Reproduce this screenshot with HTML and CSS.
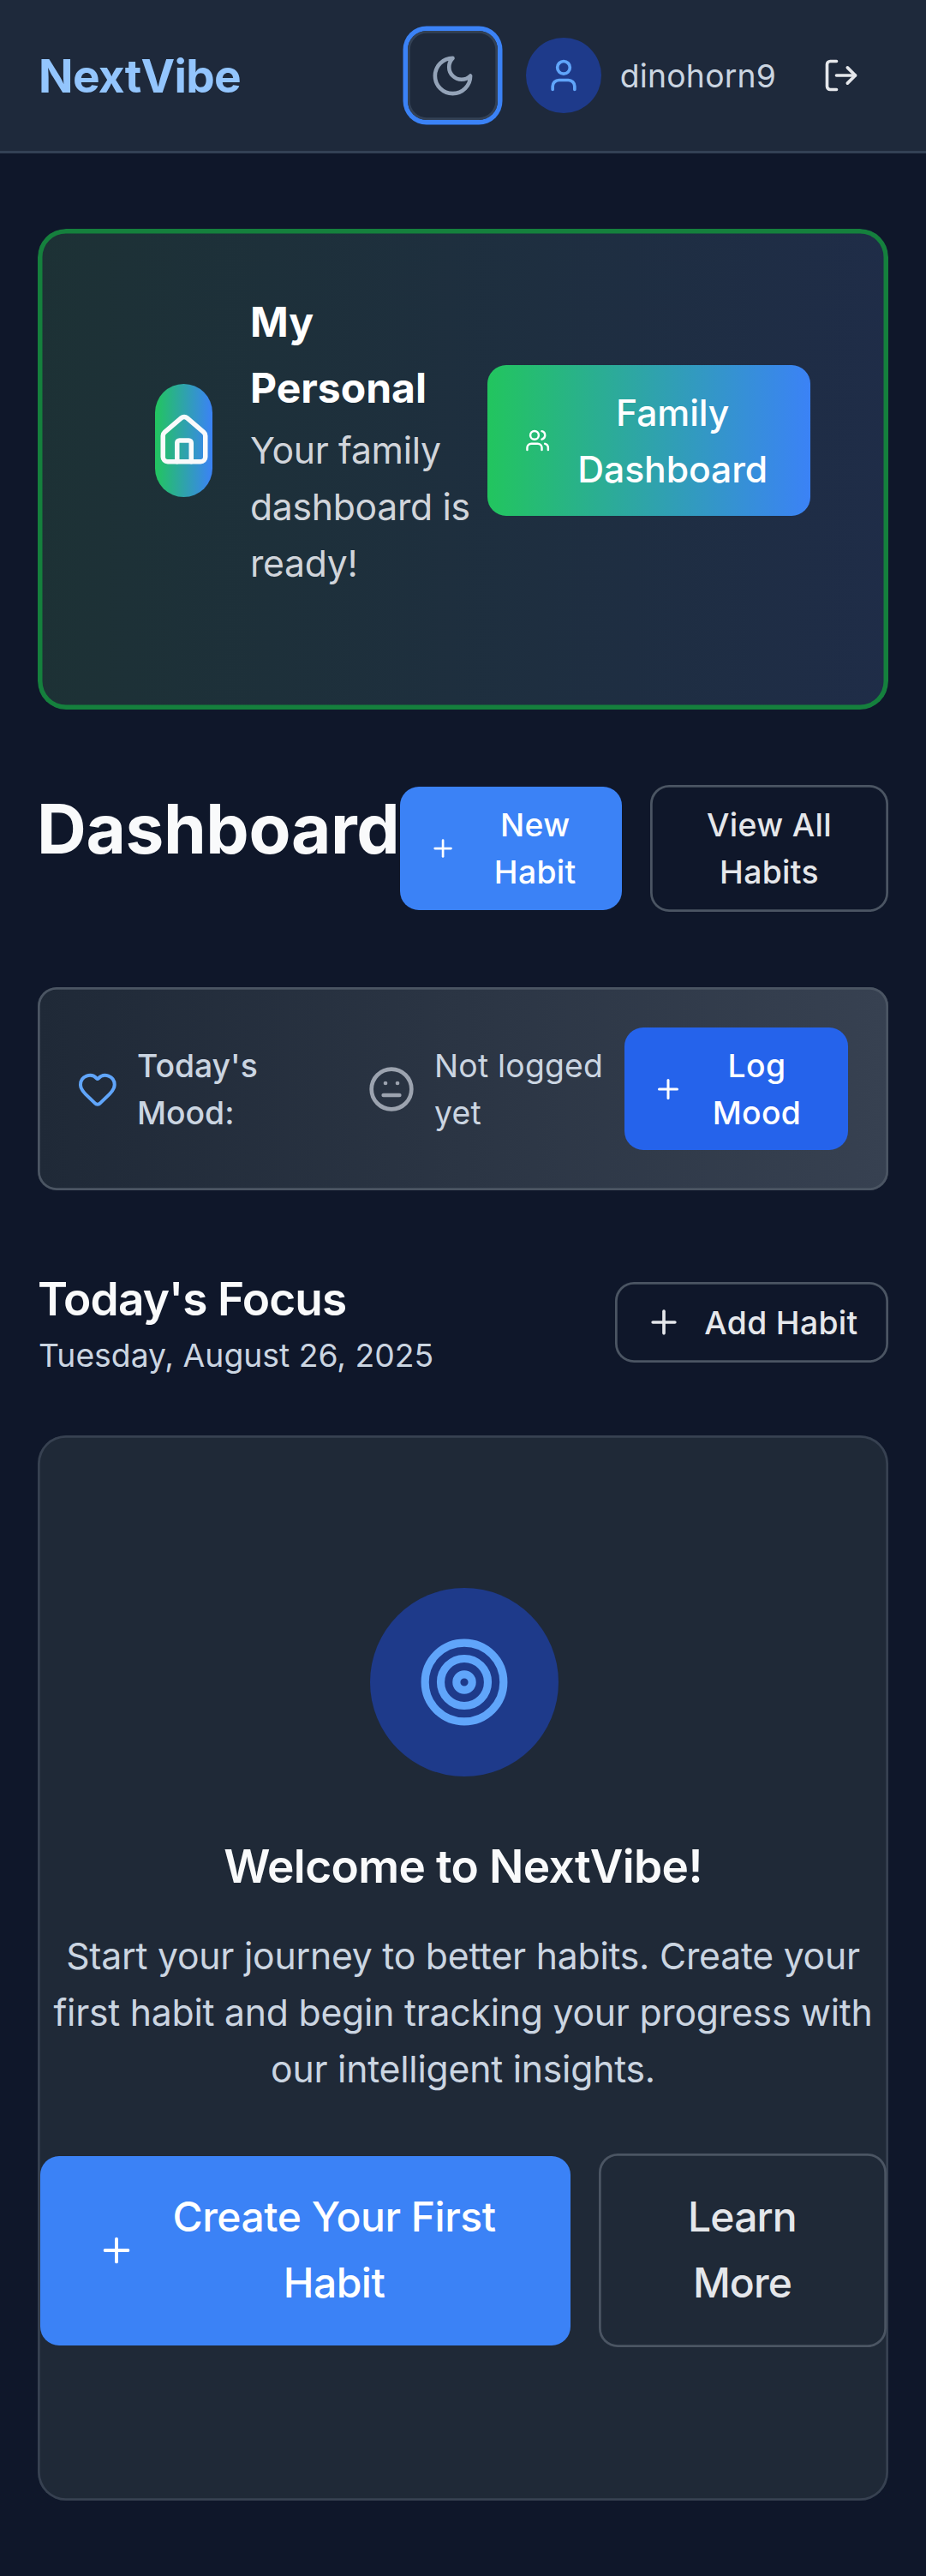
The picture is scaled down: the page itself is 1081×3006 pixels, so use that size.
FILE: index.html
```html
<!DOCTYPE html>
<html lang="en">
<head>
<meta charset="utf-8">
<title>NextVibe</title>
<link rel="stylesheet" href="styles.css">
</head>
<body>
<header class="topbar">
  <div class="logo">NextVibe</div>
  <button class="theme-toggle" aria-label="Toggle theme">
    <svg class="icon icon-55" viewBox="0 0 24 24"><path d="M12 3a6 6 0 0 0 9 9 9 9 0 1 1-9-9Z"/></svg>
  </button>
  <div class="avatar">
    <svg class="icon icon-44" viewBox="0 0 24 24"><path d="M19 21v-2a4 4 0 0 0-4-4H9a4 4 0 0 0-4 4v2"/><circle cx="12" cy="7" r="4"/></svg>
  </div>
  <span class="username">dinohorn9</span>
  <button class="logout" aria-label="Log out">
    <svg class="icon icon-44" viewBox="0 0 24 24"><path d="M9 21H5a2 2 0 0 1-2-2V5a2 2 0 0 1 2-2h4"/><path d="m16 17 5-5-5-5"/><path d="M21 12H9"/></svg>
  </button>
</header>

<main class="content">
  <section class="banner">
    <div class="banner-badge">
      <svg class="icon icon-66" viewBox="0 0 24 24"><path d="M15 21v-8a1 1 0 0 0-1-1h-4a1 1 0 0 0-1 1v8"/><path d="M3 10a2 2 0 0 1 .709-1.528l7-5.999a2 2 0 0 1 2.582 0l7 5.999A2 2 0 0 1 21 10v9a2 2 0 0 1-2 2H5a2 2 0 0 1-2-2z"/></svg>
    </div>
    <div class="banner-text">
      <h3>My<br>Personal</h3>
      <p>Your family<br>dashboard is<br>ready!</p>
    </div>
    <button class="btn btn-family">
      <svg class="icon icon-users" viewBox="0 0 24 24"><path d="M16 21v-2a4 4 0 0 0-4-4H6a4 4 0 0 0-4 4v2"/><circle cx="9" cy="7" r="4"/><path d="M22 21v-2a4 4 0 0 0-3-3.87"/><path d="M16 3.13a4 4 0 0 1 0 7.75"/></svg>
      <span>Family<br>Dashboard</span>
    </button>
  </section>

  <div class="page-head">
    <h1>Dashboard</h1>
    <button class="btn btn-new">
      <svg class="icon icon-32" viewBox="0 0 24 24"><path d="M5 12h14"/><path d="M12 5v14"/></svg>
      <span>New<br>Habit</span>
    </button>
    <button class="btn btn-outline btn-view"><span>View All<br>Habits</span></button>
  </div>

  <section class="mood">
    <div class="mood-label">
      <svg class="icon icon-heart" viewBox="0 0 24 24"><path d="M2 9.5a5.5 5.5 0 0 1 9.591-3.676.56.56 0 0 0 .818 0A5.49 5.49 0 0 1 22 9.5c0 2.29-1.5 4-3 5.5l-5.492 5.313a2 2 0 0 1-3 .019L5 15c-1.5-1.5-3-3.2-3-5.5"/></svg>
      <span>Today's<br>Mood:</span>
    </div>
    <div class="mood-status">
      <svg class="icon icon-face" viewBox="0 0 24 24"><circle cx="12" cy="12" r="10"/><path d="M8 15h8"/><path d="M9 9h.01"/><path d="M15 9h.01"/></svg>
      <span>Not logged<br>yet</span>
    </div>
    <button class="btn btn-mood">
      <svg class="icon icon-36" viewBox="0 0 24 24"><path d="M5 12h14"/><path d="M12 5v14"/></svg>
      <span>Log<br>Mood</span>
    </button>
  </section>

  <div class="focus-head">
    <div>
      <h2>Today's Focus</h2>
      <p>Tuesday, August 26, 2025</p>
    </div>
    <button class="btn btn-outline btn-add">
      <svg class="icon icon-44" viewBox="0 0 24 24"><path d="M5 12h14"/><path d="M12 5v14"/></svg>
      <span>Add Habit</span>
    </button>
  </div>

  <section class="welcome">
    <div class="target">
      <svg class="icon icon-110" viewBox="0 0 24 24"><circle cx="12" cy="12" r="10"/><circle cx="12" cy="12" r="6"/><circle cx="12" cy="12" r="2"/></svg>
    </div>
    <h3>Welcome to NextVibe!</h3>
    <p>Start your journey to better habits. Create your<br>first habit and begin tracking your progress with<br>our intelligent insights.</p>
    <div class="welcome-actions">
      <button class="btn btn-create">
        <svg class="icon icon-46" viewBox="0 0 24 24"><path d="M5 12h14"/><path d="M12 5v14"/></svg>
        <span>Create Your First<br>Habit</span>
      </button>
      <button class="btn btn-outline btn-learn"><span>Learn<br>More</span></button>
    </div>
  </section>
</main>
</body>
</html>
```
FILE: styles.css
```css
* {
  box-sizing: border-box;
  margin: 0;
}

body {
  min-height: 3006px;
  background: #0f172a;
  color: #f9fafb;
  font-family: Inter, "Liberation Sans", sans-serif;
  font-size: 37.3px;
  line-height: 55px;
}

button {
  padding: 0;
  border: 0;
  background: none;
  color: inherit;
  font: inherit;
}

/* Icons */
.icon {
  display: block;
  flex: none;
  fill: none;
  stroke: currentColor;
  stroke-width: 2;
  stroke-linecap: round;
  stroke-linejoin: round;
}
.icon-32 { width: 32.2px; height: 32.2px; }
.icon-36 { width: 36px; height: 36px; }
.icon-44 { width: 44px; height: 44px; }
.icon-46 { width: 46px; height: 46px; }
.icon-55 { width: 55px; height: 55px; }
.icon-66 { width: 66px; height: 66px; }
.icon-110 { width: 110px; height: 110px; }
.icon-users { width: 29.3px; height: 44px; }
.icon-heart { width: 47.7px; height: 47.7px; color: #60a5fa; }
.icon-face { width: 56px; height: 56px; color: #9ca3af; }

/* Header */
.topbar {
  display: flex;
  align-items: center;
  height: 179px;
  padding: 0 44.3px 0 45px;
  background: #1e293b;
  border-bottom: 3px solid #334155;
}
.logo {
  margin-right: auto;
  color: #93c5fd;
  font-size: 53.2px;
  font-weight: 700;
  line-height: 77px;
  letter-spacing: -0.0122em;
}
.theme-toggle {
  display: flex;
  align-items: center;
  justify-content: center;
  width: 104.5px;
  height: 104.5px;
  margin-right: 33px;
  border-radius: 22px;
  box-shadow: 0 0 0 5.5px #3b82f6, inset 0 0 0 2.75px #334155;
  color: #94a3b8;
}
.avatar {
  display: flex;
  align-items: center;
  justify-content: center;
  width: 88px;
  height: 88px;
  margin-right: 22px;
  border-radius: 50%;
  background: #1e3a8a;
  color: #60a5fa;
}
.username {
  width: 203px;
  color: #cbd5e1;
  letter-spacing: 0.0059em;
}
.logout {
  display: flex;
  align-items: center;
  justify-content: center;
  width: 110px;
  height: 99px;
  color: #e5e7eb;
}

.content {
  padding: 88px 44px;
}

/* Buttons */
.btn {
  display: flex;
  flex: none;
  align-items: center;
  border-radius: 22px;
  color: #fff;
  font-weight: 500;
  text-align: center;
  letter-spacing: 0.009em;
  white-space: nowrap;
}
.btn span {
  flex: 1;
}
.btn-outline {
  box-shadow: inset 0 0 0 2.75px #4b5563;
  color: #e5e7eb;
}

/* Family banner */
.banner {
  display: flex;
  align-items: flex-start;
  height: 561px;
  padding: 71.3px 91px 0 137px;
  border-radius: 33px;
  background: linear-gradient(to right, rgba(20, 83, 45, 0.2), rgba(30, 58, 138, 0.2)), #1f2937;
  box-shadow: inset 0 0 0 5.5px #15803d;
}
.banner-badge {
  display: flex;
  align-items: center;
  justify-content: center;
  flex: none;
  width: 67px;
  height: 132px;
  margin: 110px 44px 0 0;
  border-radius: 33.5px;
  background: linear-gradient(to right, #22c55e, #3b82f6);
}
.banner-text {
  flex: none;
  width: 277.3px;
}
.banner-text h3 {
  margin-top: -1px;
  color: #fff;
  font-size: 48px;
  font-weight: 700;
  line-height: 77px;
}
.banner-text p {
  margin-top: 2px;
  color: #d1d5db;
  font-size: 42.7px;
  line-height: 66px;
  letter-spacing: -0.007em;
}
.btn-family {
  gap: 25.7px;
  width: 376.8px;
  height: 176px;
  margin-top: 88px;
  padding: 0 44px;
  background: linear-gradient(to right, #22c55e, #3b82f6);
  font-size: 42.7px;
  line-height: 66px;
  letter-spacing: -0.002em;
}
.btn-family span {
  padding-top: 2px;
}

/* Page heading */
.page-head {
  display: flex;
  align-items: center;
  height: 148px;
  margin-top: 88px;
}
h1 {
  align-self: flex-start;
  width: 423px;
  padding-top: 1px;
  font-size: 80px;
  font-weight: 700;
  line-height: 99px;
  letter-spacing: -0.0046em;
  text-indent: -1px;
  white-space: nowrap;
}
.btn-new {
  gap: 24px;
  width: 258.7px;
  height: 143.5px;
  margin-right: 33.3px;
  padding: 0 33px 0 33.5px;
  background: #3b82f6;
}
.btn-view {
  width: 278px;
  height: 148px;
}

/* Mood */
.mood {
  display: flex;
  align-items: center;
  height: 237px;
  margin-top: 88px;
  padding: 0 47px 0 46.3px;
  border-radius: 22px;
  background: linear-gradient(to right, #1f2937, #374151);
  box-shadow: inset 0 0 0 2.75px #4b5563;
  color: #cbd5e1;
}
.mood-label,
.mood-status {
  display: flex;
  flex: none;
  align-items: center;
  gap: 22px;
}
.mood-label {
  width: 338.7px;
  font-weight: 500;
}
.mood-status {
  width: 300px;
  letter-spacing: 0.006em;
}
.btn-mood {
  gap: 12px;
  width: 261px;
  height: 143px;
  padding: 0 33px;
  background: #2563eb;
}

/* Today's focus */
.focus-head {
  display: flex;
  align-items: center;
  justify-content: space-between;
  margin-top: 88px;
}
h2 {
  font-size: 53.2px;
  font-weight: 600;
  line-height: 77px;
  letter-spacing: -0.0166em;
}
.focus-head p {
  color: #cbd5e1;
  text-indent: 1px;
}
.btn-add {
  gap: 25px;
  width: 319.4px;
  height: 93.5px;
  padding-left: 35.7px;
  text-align: left;
}

/* Welcome card */
.welcome {
  height: 1242.5px;
  margin-top: 66px;
  padding: 178px 2.5px 0;
  border-radius: 33px;
  background: #1f2937;
  box-shadow: inset 0 0 0 2.75px #374151;
  text-align: center;
}
.target {
  display: flex;
  align-items: center;
  justify-content: center;
  width: 220px;
  height: 220px;
  margin-left: 385.3px;
  border-radius: 50%;
  background: #1e3a8a;
  color: #60a5fa;
}
.welcome h3 {
  margin-top: 66px;
  font-size: 53.2px;
  font-weight: 600;
  line-height: 77px;
  letter-spacing: -0.0122em;
}
.welcome p {
  margin-top: 34px;
  color: #cbd5e1;
  font-size: 42.7px;
  line-height: 66px;
  letter-spacing: -0.0053em;
  white-space: nowrap;
}
.welcome-actions {
  display: flex;
  align-items: center;
  justify-content: space-between;
  height: 226px;
  margin-top: 65px;
}
.btn-create,
.btn-learn {
  font-size: 48px;
  line-height: 77px;
  letter-spacing: -0.01em;
}
.btn-create {
  gap: 22px;
  width: 619px;
  height: 221px;
  padding: 0 66px;
  background: #3b82f6;
}
.btn-learn {
  width: 336px;
  height: 226px;
  letter-spacing: -0.018em;
}
.btn-create span,
.btn-learn span {
  padding-bottom: 2px;
}
```
